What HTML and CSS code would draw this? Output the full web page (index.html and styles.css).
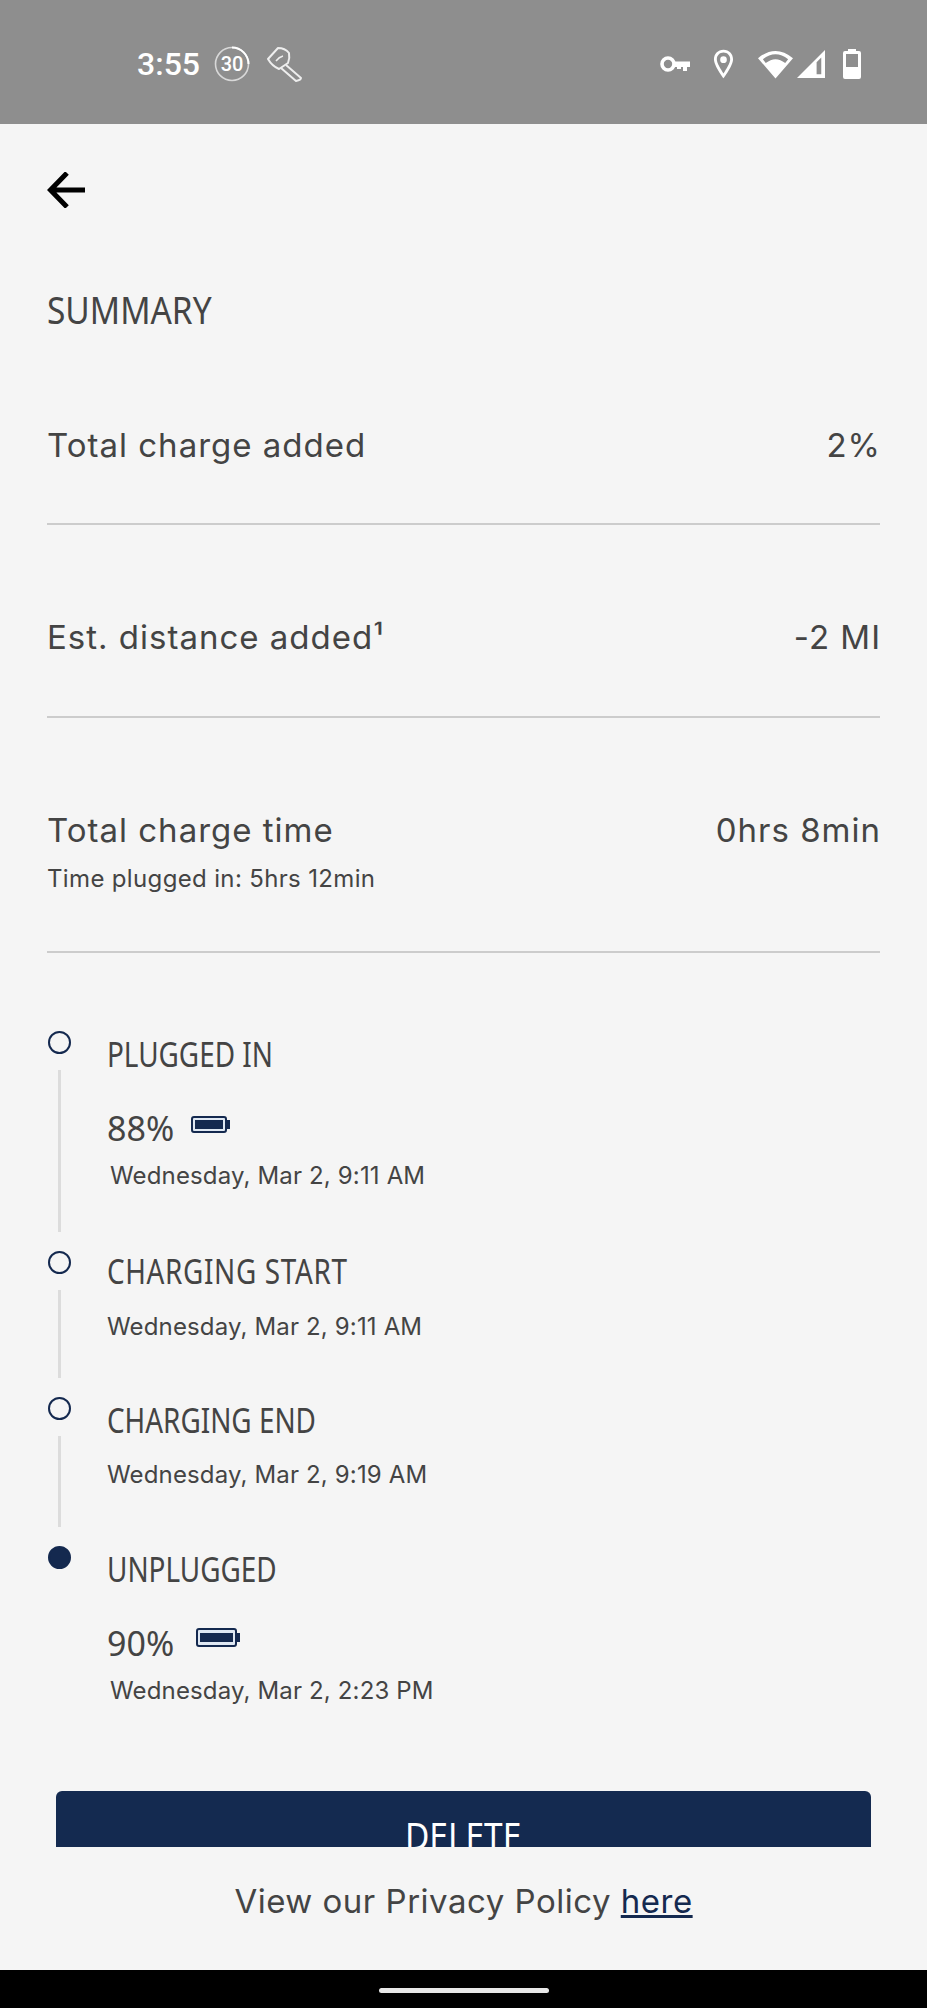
FILE: index.html
```html
<!DOCTYPE html>
<html lang="en">
<head>
<meta charset="utf-8">
<title>Charge summary</title>
<link rel="stylesheet" href="styles.css">
</head>
<body>
<div class="screen">
  <header class="status">
    <div class="status-left">
      <span class="clock">3:55</span>
      <svg class="ic-timer" viewBox="0 0 36 36" width="36" height="36"><circle cx="18" cy="18" r="16.500" fill="none" stroke="#d8d8d8" stroke-width="1.600"/><path d="M18 1.500a16.500 16.500 0 0 1 16.500 16.500" fill="none" stroke="#fff" stroke-width="2"/><text x="18" y="25" text-anchor="middle" class="timer-text">30</text></svg>
      <svg class="ic-torch" viewBox="0 0 36 36" width="36" height="36" fill="none" stroke="#eee" stroke-width="2" stroke-linejoin="round"><path d="M2 13 12 2Q19 2 23 7 24 12 22 17L13 23Q6 20 2 13Z"/><path d="M10 15Q13 11 17 10" stroke-width="1.500"/><path d="M20 19 35 32Q35 34 30 35L15 22"/></svg>
    </div>
    <div class="status-right">
      <svg class="ic-key" viewBox="0 0 30 16" width="30" height="16" fill="none" stroke="#fff"><circle cx="8" cy="8" r="6" stroke-width="3.600"/><path d="M13 5.500H30V11H27V15H23V11H21V13H17V11H13Z" fill="#fff" stroke="none"/></svg>
      <svg class="ic-pin" viewBox="0 0 22 30" width="21" height="30"><path fill="#fff" fill-rule="evenodd" d="M11 0C5 0 1 4.500 1 10c0 7 10 20 10 20s10-13 10-20C21 4.500 17 0 11 0Zm0 3c4 0 7 3 7 7 0 4-4 10-7 15-3-5-7-11-7-15 0-4 3-7 7-7Zm0 4a3.500 3.500 0 1 0 0 7 3.500 3.500 0 0 0 0-7Z"/></svg>
      <svg class="ic-wifi" viewBox="0 0 36 30" width="35" height="30"><path fill="#fff" fill-rule="evenodd" d="M0 9Q18-6 36 9L18 30ZM5 10Q18 0 31 10L28 14Q18 6 8 14Z"/></svg>
      <svg class="ic-signal" viewBox="0 0 30 30" width="28" height="28"><path fill="#fff" fill-rule="evenodd" d="M30 0V30H0ZM26 8 21 13V26H26Z"/></svg>
      <svg class="ic-batt" viewBox="0 0 18 30" width="18" height="30"><path fill="#fff" fill-rule="evenodd" d="M5 0H13V2H16Q18 2 18 4V28Q18 30 16 30H2Q0 30 0 28V4Q0 2 2 2H5ZM3 5V18H15V5Z"/></svg>
    </div>
  </header>

  <main class="content">
    <button class="back" aria-label="Back">
      <svg viewBox="0 0 38 36" width="38" height="36" fill="none" stroke="#000" stroke-width="5"><path d="M38 18H4M20 1 3.500 18 20 35"/></svg>
    </button>
    <h1 class="heading"><span class="cond cond-head">SUMMARY</span></h1>

    <section class="row row-1">
      <span class="row-label">Total charge added</span><span class="row-value">2%</span>
    </section>
    <section class="row row-2">
      <span class="row-label">Est. distance added¹</span><span class="row-value">-2 MI</span>
    </section>
    <section class="row row-3">
      <div>
        <div class="row-label">Total charge time</div>
        <div class="row-sub">Time plugged in: 5hrs 12min</div>
      </div>
      <span class="row-value">0hrs 8min</span>
    </section>

    <ol class="timeline">
      <li class="event ev-a">
        <span class="dot"></span>
        <h2 class="ev-title"><span class="cond">PLUGGED IN</span></h2>
        <div class="ev-level"><span class="pct">88%</span>
          <svg class="batt" viewBox="0 0 39 17" width="39" height="17"><rect x="1" y="1" width="34" height="15" rx="2" fill="#dfe8f3" stroke="#14294f" stroke-width="2"/><rect x="4" y="4" width="28" height="9" fill="#14294f"/><rect x="36" y="4" width="3" height="9" fill="#14294f"/></svg>
        </div>
        <div class="ev-time inset">Wednesday, Mar 2, 9:11 AM</div>
      </li>
      <li class="event ev-b">
        <span class="dot"></span>
        <h2 class="ev-title"><span class="cond cond-wide">CHARGING START</span></h2>
        <div class="ev-time">Wednesday, Mar 2, 9:11 AM</div>
      </li>
      <li class="event ev-c">
        <span class="dot"></span>
        <h2 class="ev-title"><span class="cond">CHARGING END</span></h2>
        <div class="ev-time">Wednesday, Mar 2, 9:19 AM</div>
      </li>
      <li class="event ev-d">
        <span class="dot dot-filled"></span>
        <h2 class="ev-title"><span class="cond">UNPLUGGED</span></h2>
        <div class="ev-level"><span class="pct">90%</span>
          <svg class="batt batt-lg" viewBox="0 0 44 19" width="44" height="19"><rect x="1" y="1" width="39" height="17" rx="2" fill="#dfe8f3" stroke="#14294f" stroke-width="2"/><rect x="4" y="5" width="33" height="9" fill="#14294f"/><rect x="41" y="5" width="3" height="9" fill="#14294f"/></svg>
        </div>
        <div class="ev-time inset">Wednesday, Mar 2, 2:23 PM</div>
      </li>
    </ol>

    <button class="delete"><span class="cond cond-btn">DELETE</span></button>
  </main>

  <footer class="policy">View our Privacy Policy <a href="#" class="policy-link">here</a></footer>
  <nav class="navbar"><span class="home"></span></nav>
</div>
</body>
</html>
```
FILE: styles.css
```css
* { box-sizing: border-box; }
html, body { margin: 0; padding: 0; }
body { width: 927px; height: 2008px; overflow: hidden; background: #f5f5f5; font-family: Inter, sans-serif; color: #444; }
.screen { display: flex; flex-direction: column; height: 2008px; }

.status { flex: 0 0 124px; background: #8e8e8e; display: flex; justify-content: space-between; align-items: center; padding: 4px 66px 0 137px; }
.status-left, .status-right { display: flex; align-items: center; }
.clock { font-family: Roboto, sans-serif; font-weight: 500; font-size: 32px; color: #fff; }
.ic-timer { margin-left: 14px; }
.timer-text { font: 500 20px Roboto, sans-serif; fill: #fff; }
.ic-torch { margin-left: 16px; }
.ic-pin { margin-left: 23px; }
.ic-wifi { margin-left: 24px; }
.ic-signal { margin-left: 4px; }
.ic-batt { margin-left: 18px; }

.content { flex: 0 0 1723px; height: 1723px; overflow: hidden; padding: 0 47px; display: flex; flex-direction: column; }
.back { flex: none; border: 0; background: none; padding: 0; margin-top: 48px; width: 38px; height: 36px; display: block; }
.back svg { display: block; }
.cond { display: inline-block; font-family: "Noto Sans", sans-serif; transform: scaleX(.82); transform-origin: 0 50%; white-space: nowrap; }
.cond-head { transform: scaleX(.88); }
.cond-wide { letter-spacing: .8px; }
.heading { flex: none; margin: 76px 0 0; font: 400 38px/50px "Noto Sans", sans-serif; color: #444; }

.row { flex: none; display: flex; justify-content: space-between; border-bottom: 2px solid #ccc; font-size: 33px; letter-spacing: 1px; }
.row-label, .row-value { line-height: 44px; white-space: nowrap; }
.row-value { margin-right: -1px; }
.row-1 { height: 191px; padding-top: 89px; }
.row-2 { height: 193px; padding-top: 90px; }
.row-3 { height: 235px; padding-top: 90px; }
.row-sub { font-size: 24px; letter-spacing: .35px; line-height: 34px; margin-top: 10px; }

.timeline { flex: none; list-style: none; margin: 0; padding: 0; }
.event { position: relative; display: flow-root; padding-left: 60px; }
.dot { position: absolute; left: 1px; top: 0; width: 23px; height: 23px; border: 2px solid #14294f; border-radius: 50%; background: #f5f5f5; }
.dot-filled { background: #14294f; }
.event::after { content: ""; position: absolute; left: 11px; top: 39px; bottom: 19px; width: 3px; background: #dcdcdc; }
.ev-d::after { display: none; }
.ev-a { margin-top: 78px; height: 220px; }
.ev-b { height: 146px; }
.ev-c { height: 149px; }
.ev-title { margin: 0; font: 400 34px/46px "Noto Sans", sans-serif; color: #444; }
.ev-b .ev-title { margin-top: -3px; }
.ev-level { display: flex; align-items: flex-start; height: 50px; margin-top: 28px; }
.pct { font: 400 34px/46px "Noto Sans", sans-serif; width: 84px; }
.batt { margin-top: 11px; }
.batt-lg { margin-left: 5px; margin-top: 8px; }
.ev-time { font-size: 24px; letter-spacing: .15px; line-height: 34px; margin-top: 15px; white-space: nowrap; }
.ev-b .ev-time { margin-top: 16px; }
.ev-time.inset { margin: 4px 0 0 3px; }

.delete { flex: none; display: flex; justify-content: center; align-items: flex-start; width: 815px; height: 120px; margin: 83px 0 0 9px; border: 0; border-radius: 6px; background: #142a50; color: #fff; font: 400 38px/48px "Noto Sans", sans-serif; padding: 20px 0 0; }
.cond-btn { transform: scaleX(.88); transform-origin: 50% 50%; }

.policy { flex: 0 0 123px; padding-top: 31px; text-align: center; font-size: 33px; letter-spacing: .5px; line-height: 46px; color: #444; }
.policy-link { color: #14294f; text-decoration: underline; }
.navbar { flex: 0 0 38px; background: #000; display: flex; justify-content: center; align-items: flex-start; padding-top: 18px; }
.home { width: 170px; height: 5px; border-radius: 3px; background: #e8e8e8; }
```
